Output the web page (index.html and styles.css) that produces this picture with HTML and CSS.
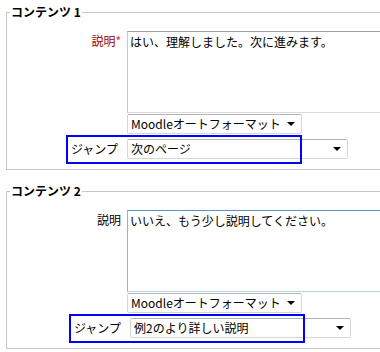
FILE: index.html
```html
<!DOCTYPE html>
<html lang="ja">
<head>
<meta charset="utf-8">
<title>コンテンツ</title>
<link rel="stylesheet" href="styles.css">
</head>
<body>
<fieldset class="page">
    <legend>コンテンツ 1</legend>
    <div class="row first">
        <label class="lbl req">説明<span class="star">*</span></label>
        <div class="memo">はい、理解しました。次に進みます。</div>
    </div>
    <div class="row">
        <span class="lbl"></span>
        <div class="sel fmt">Moodleオートフォーマット<i class="arr"></i></div>
    </div>
    <div class="jump">
        <label class="jlbl">ジャンプ</label>
        <div class="sel jsel">次のページ<i class="arr"></i></div>
    </div>
</fieldset>

<fieldset class="page second">
    <legend>コンテンツ 2</legend>
    <div class="row first">
        <label class="lbl">説明</label>
        <div class="memo focus">いいえ、もう少し説明してください。</div>
    </div>
    <div class="row">
        <span class="lbl"></span>
        <div class="sel fmt">Moodleオートフォーマット<i class="arr"></i></div>
    </div>
    <div class="jump shift">
        <label class="jlbl">ジャンプ</label>
        <div class="sel jsel">例2のより詳しい説明<i class="arr"></i></div>
    </div>
</fieldset>
</body>
</html>
```

FILE: styles.css
```css
*{ box-sizing: border-box; }
html,body{ margin: 0; padding: 0; background: #fff; }
body{
    padding-left: 6px; overflow: hidden; width: 380px; height: 352px;
    font-family: "Noto Sans CJK JP", "Noto Sans", sans-serif;
    font-size: 12px; line-height: 16px; color: #000;
}
.page{
    width: 374px; margin: 4px 0 0 0; padding: 0 0 5px 0;
    border: 1px solid #c6c6c6; border-right: 0;
}
.page.second{ margin-top: 13px; }
.page > legend{
    margin-left: 3px; padding: 0 1px; font-weight: bold; line-height: 16px;
}
.row{ display: flex; gap: 6px; }
.row.first{ margin-top: 11px; }
.lbl{ width: 114px; flex-shrink: 0; text-align: right; padding-top: 2px; }
.req{ color: #a00000; }
.star{ color: #ee2222; }
.memo{
    width: 253px; height: 82px; flex-shrink: 0;
    border: 1px solid #dcdcdc; border-right: 0;
    border-top-color: #a0a0a0; border-left-color: #c8c8c8;
    padding: 2px 2px;
}
.memo.focus{ border-color: #b8d0e8; border-top-color: #5b93c8; border-left-color: #8fb4d8; }
.sel{
    position: relative; height: 20px; flex-shrink: 0;
    border: 1px solid #d6d6d6; border-top-color: #b4b4b4; border-radius: 2px;
    background: #fff; padding: 1px 0 0 3px; white-space: nowrap;
}
.fmt{ width: 175px; margin-top: 1px; }
.arr{
    position: absolute; right: 6px; top: 7px;
    border-left: 4px solid transparent; border-right: 4px solid transparent;
    border-top: 4px solid #000;
}
/* 青い枠は注記なので中身の上に重ねる */
.jump{
    position: relative; display: flex; align-items: center; gap: 7px;
    width: 236px; height: 29px; margin: 1px 0 0 59px; padding: 0 0 1px 2px;
}
.jump::after{
    content: ""; position: absolute; left: 0; top: 0; right: 0; bottom: 0;
    border: 2px solid #0000ff; z-index: 2; pointer-events: none;
}
.jump.shift{ margin-left: 62px; }
.jlbl{ width: 52px; flex-shrink: 0; text-align: right; padding-right: 2px; }
.jsel{ width: 221px; }
```
